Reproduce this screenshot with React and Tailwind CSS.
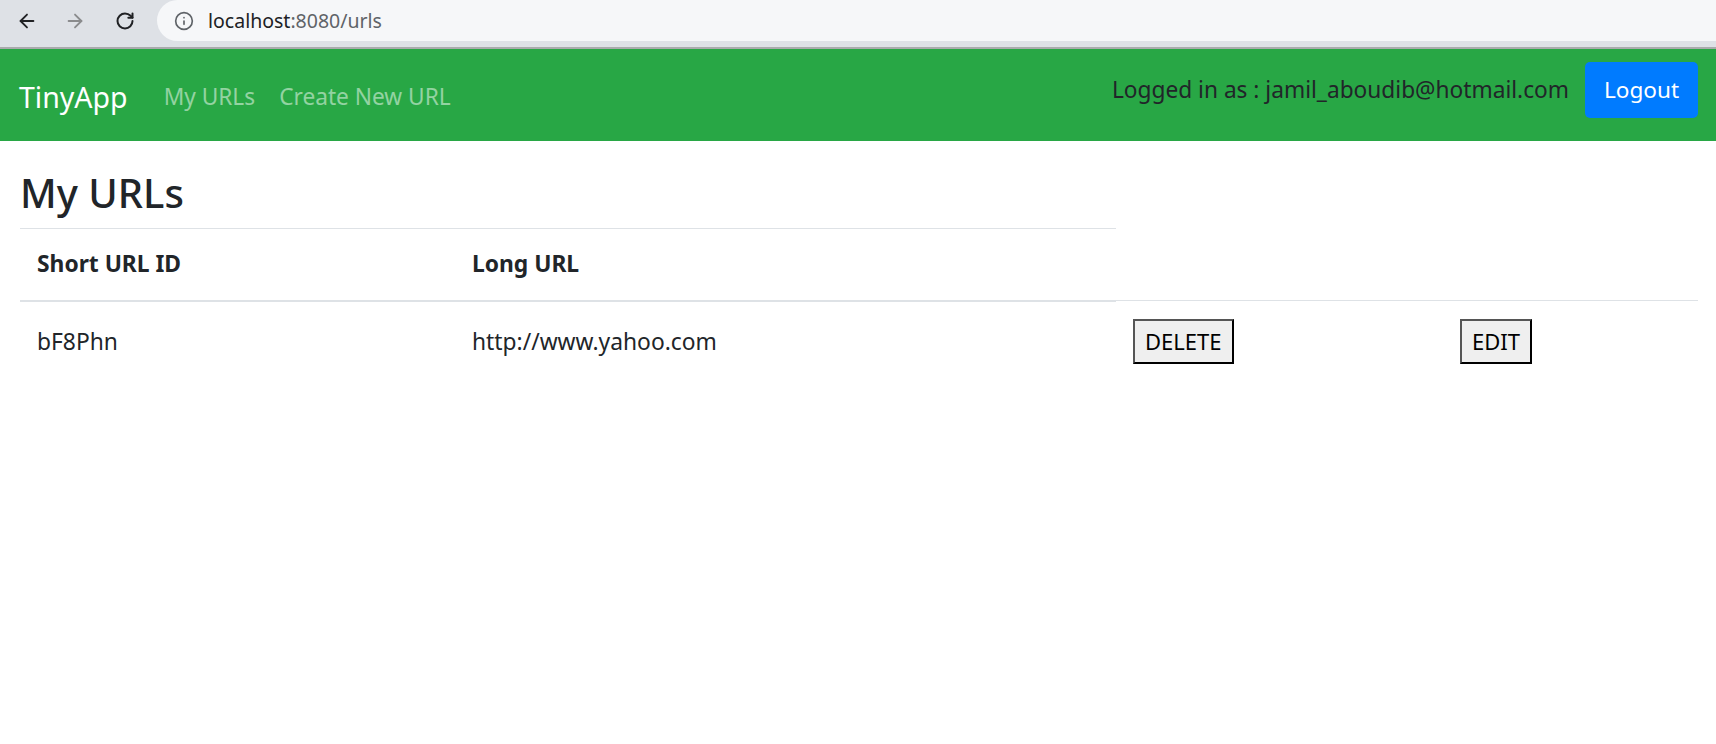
import { ArrowLeft, ArrowRight, RotateCw, Info } from "lucide-react";

const font = { fontFamily: '"Noto Sans", "Open Sans", Arial, sans-serif' };

function BrowserBar() {
  return (
    <div className="flex h-[49px] flex-col bg-[#dee1e6]">
      <div className="flex h-[47px] items-start">
        <div className="flex h-[41px] items-center">
          <ArrowLeft className="ml-[16px] h-[22px] w-[22px] text-[#202124]" strokeWidth={2} />
          <ArrowRight className="ml-[26px] h-[22px] w-[22px] text-[#8a8b8d]" strokeWidth={2} />
          <RotateCw className="ml-[29px] h-[20px] w-[20px] text-[#202124]" strokeWidth={2.4} />
        </div>
        <div className="ml-[22px] flex h-[41px] flex-1 items-center rounded-l-full bg-[#f6f7f9] pl-[17px]">
          <Info className="h-[20px] w-[20px] text-[#5f6368]" strokeWidth={2} />
          <span className="ml-[14px] text-[19.5px] text-[#202124]">
            localhost<span className="text-[#5f6368]">:8080/urls</span>
          </span>
        </div>
      </div>
      <div className="h-[2px] bg-[#a9aaac]" />
    </div>
  );
}

function Navbar() {
  return (
    <nav className="flex h-[92px] items-center bg-[#28a745] pl-[19px] pr-[18px]">
      <div className="flex items-center pt-[5px]">
        <span className="text-[28.5px] text-white">TinyApp</span>
        <a className="ml-[36px] text-[22.7px] text-white/50">My URLs</a>
        <a className="ml-[24px] text-[22.7px] text-white/50">Create New URL</a>
      </div>
      <div className="ml-auto flex items-center pb-[10px]">
        <span className="text-[22.7px] text-[#212529]">Logged in as : jamil_aboudib@hotmail.com</span>
        <button className="ml-[16px] h-[56px] w-[113px] rounded-[5px] bg-[#007bff] text-[22.6px] text-white">
          Logout
        </button>
      </div>
    </nav>
  );
}

function NativeButton({ children }) {
  return (
    <button className="h-[45px] border-2 border-[#555] border-r-black border-b-black bg-[#efefef] px-[10px] text-[22px] text-black">
      {children}
    </button>
  );
}

export default function App() {
  return (
    <div className="min-h-[744px] bg-white text-[#212529]" style={font}>
      <BrowserBar />
      <Navbar />
      <main className="px-[20px]">
        <h1 className="mt-[28px] mb-[11px] text-[40px] leading-[48px] font-medium">My URLs</h1>
        <table className="w-[1678px] table-fixed border-collapse text-[22.8px]">
          <colgroup>
            <col className="w-[435px]" />
            <col className="w-[661px]" />
            <col className="w-[327px]" />
            <col className="w-[255px]" />
          </colgroup>
          <thead>
            <tr>
              <th className="h-[72px] border-t border-b-2 border-[#dee2e6] px-[17px] text-left font-bold">Short URL ID</th>
              <th className="h-[72px] border-t border-b-2 border-[#dee2e6] px-[17px] text-left font-bold">Long URL</th>
            </tr>
          </thead>
          <tbody>
            <tr>
              <td className="h-[82px] border-t border-[#dee2e6] px-[17px]">bF8Phn</td>
              <td className="h-[82px] border-t border-[#dee2e6] px-[17px]">http://www.yahoo.com</td>
              <td className="h-[82px] border-t border-[#dee2e6] px-[17px]">
                <NativeButton>DELETE</NativeButton>
              </td>
              <td className="h-[82px] border-t border-[#dee2e6] px-[17px]">
                <NativeButton>EDIT</NativeButton>
              </td>
            </tr>
          </tbody>
        </table>
      </main>
    </div>
  );
}
